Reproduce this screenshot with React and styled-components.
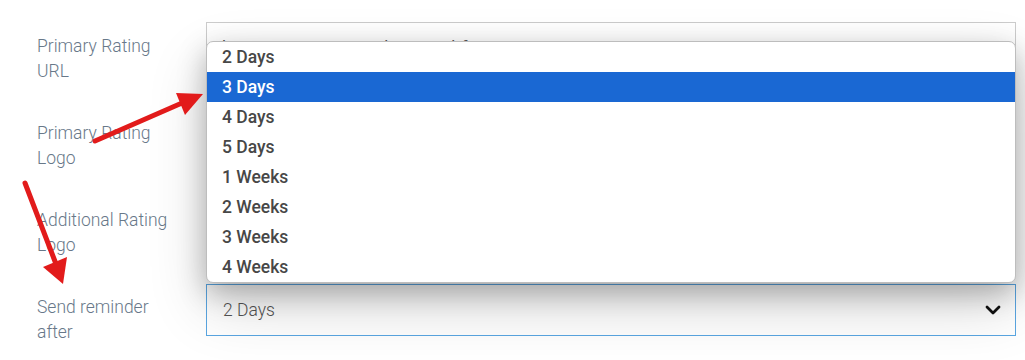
import React from "react";
import styled, { createGlobalStyle } from "styled-components";

const Global = createGlobalStyle`
  html, body { margin: 0; padding: 0; background: #fff; }
  body { font-family: Roboto, "Liberation Sans", sans-serif; }
  * { box-sizing: border-box; }
`;

const Page = styled.div`
  position: relative;
  width: 1025px;
  height: 360px;
  overflow: hidden;
  padding: 22px 0 0 37px;
`;

const Form = styled.div`
  display: flex;
  flex-direction: column;
  gap: 35px;
`;

const Row = styled.div`
  display: grid;
  grid-template-columns: 169px 810px;
  height: 52px;
  align-items: start;
`;

const Label = styled.label`
  padding-top: 12px;
  font-size: 17.5px;
  line-height: 25px;
  font-weight: 300;
  color: #687889;
  width: 140px;
`;

const Input = styled.div`
  height: 52px;
  border: 1px solid #ccc;
  background: #fff;
  padding: 0 15px;
  display: flex;
  align-items: center;
  font-size: 17.5px;
  color: #555;
  white-space: nowrap;
  overflow: hidden;
`;

const SelectWrap = styled.div`
  position: relative;
  margin-top: 1px;
`;

const Select = styled.div`
  height: 52px;
  border: 1px solid #5aa6e2;
  background: #fff;
  padding: 0 14px 0 16px;
  display: flex;
  align-items: center;
  justify-content: space-between;
  font-size: 17.5px;
  font-weight: 300;
  color: #555;
`;

const Menu = styled.ul`
  position: absolute;
  left: 0;
  right: 0;
  bottom: calc(100% + 1px);
  margin: 0;
  padding: 0;
  list-style: none;
  background: #fff;
  border: 1px solid #bdbdbd;
  border-radius: 7px;
  overflow: hidden;
  box-shadow: 0 10px 28px rgba(0, 0, 0, 0.26), 0 24px 60px rgba(0, 0, 0, 0.16);
  z-index: 2;
`;

const Option = styled.li`
  height: 30px;
  display: flex;
  align-items: center;
  padding-left: 15px;
  font-size: 17.5px;
  font-weight: 500;
  color: ${(p) => (p.$active ? "#fff" : "#474747")};
  background: ${(p) => (p.$active ? "#1a68d3" : "transparent")};
`;

const Annotations = styled.svg`
  position: absolute;
  left: 0;
  top: 0;
  z-index: 3;
  pointer-events: none;
`;

const options = ["2 Days", "3 Days", "4 Days", "5 Days", "1 Weeks", "2 Weeks", "3 Weeks", "4 Weeks"];

export default function App() {
  return (
    <Page>
      <Global />
      <Form>
        <Row>
          <Label>Primary Rating URL</Label>
          <Input>https://g.page/r/CVFbmcUQLbf4EBA/review</Input>
        </Row>
        <Row>
          <Label>Primary Rating Logo</Label>
          <Input />
        </Row>
        <Row>
          <Label>Additional Rating Logo</Label>
          <Input />
        </Row>
        <Row>
          <Label>Send reminder after</Label>
          <SelectWrap>
            <Menu>
              {options.map((o) => (
                <Option key={o} $active={o === "3 Days"}>{o}</Option>
              ))}
            </Menu>
            <Select>
              <span>2 Days</span>
              <svg width="16" height="10" viewBox="0 0 16 10">
                <polyline points="2,2 8,8 14,2" fill="none" stroke="#111" strokeWidth="2.8" strokeLinecap="round" strokeLinejoin="round" />
              </svg>
            </Select>
          </SelectWrap>
        </Row>
      </Form>
      <Annotations width="1025" height="360" viewBox="0 0 1025 360">
        <line x1="95" y1="141" x2="182" y2="103" stroke="#e21b1b" strokeWidth="5" strokeLinecap="round" />
        <polygon points="176,93 203,94 185,115" fill="#e21b1b" />
        <line x1="25" y1="183" x2="56" y2="264" stroke="#e21b1b" strokeWidth="5" strokeLinecap="round" />
        <polygon points="43,267 67,257 63,284" fill="#e21b1b" />
      </Annotations>
    </Page>
  );
}
